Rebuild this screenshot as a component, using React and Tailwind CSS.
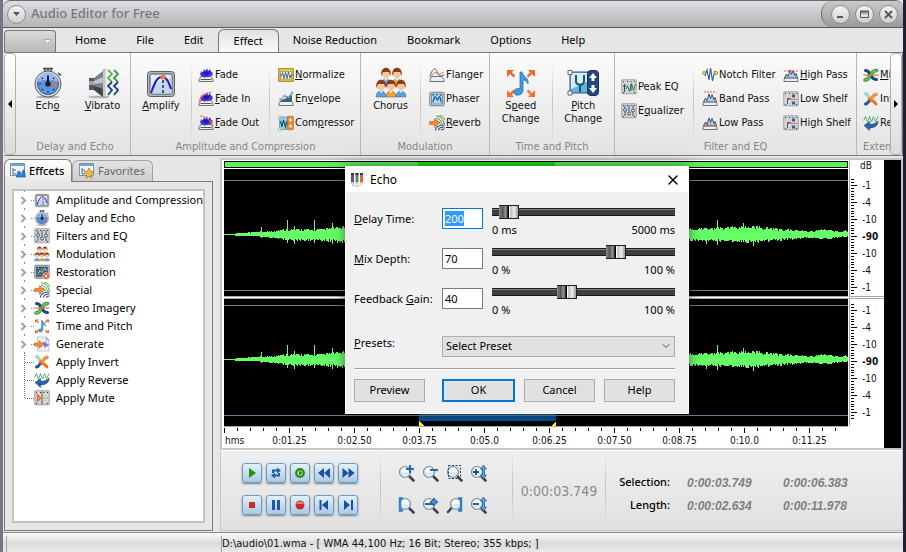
import { useEffect, useRef, useState } from 'react'
import { ChevronDown, X } from 'lucide-react'

const MENU = ['Home', 'File', 'Edit', 'Effect', 'Noise Reduction', 'Bookmark', 'Options', 'Help']

const TREE = [
  ['Amplitude and Compression', 'amplify', true],
  ['Delay and Echo', 'echo', true],
  ['Filters and EQ', 'equalizer', true],
  ['Modulation', 'chorus', true],
  ['Restoration', 'restore', true],
  ['Special', 'reverb', true],
  ['Stereo Imagery', 'mixer', true],
  ['Time and Pitch', 'speed', true],
  ['Generate', 'generate', true],
  ['Apply Invert', 'invert', false],
  ['Apply Reverse', 'reverse', false],
  ['Apply Mute', 'mute', false],
]

const PLAYBACK = [
  ['Play', 'play'],
  ['Loop', 'loop'],
  ['Play from start', 'playAll'],
  ['Rewind', 'rewind'],
  ['Forward', 'forward'],
  ['Stop', 'stop'],
  ['Pause', 'pause'],
  ['Record', 'record'],
  ['To start', 'toStart'],
  ['To end', 'toEnd'],
]

const ZOOMS = ['in', 'out', 'area', 'vin', 'left', 'full', 'right', 'vout']

const SCALE = ['-1', '-4', '-10', '-90', '-10', '-4', '-1']
const TIMES = ['0:01.25', '0:02.50', '0:03.75', '0:05.0', '0:06.25', '0:07.50', '0:08.75', '0:10.0', '0:11.25']

const ART = {
  echo: (
    <>
      <ellipse cx="16" cy="30" rx="12" ry="1.5" fill="#000" opacity=".25" />
      <path d="M11 1.5h10M13 1v3M19 1v3M16 1v4" stroke="#444" strokeWidth="1.6" fill="none" />
      <path d="M26 6l3 2.5" stroke="#666" strokeWidth="2" />
      <circle cx="16" cy="17" r="13" fill="#d8dadd" stroke="#5c5f63" />
      <circle cx="16" cy="17" r="10.5" fill="#5f93e0" stroke="#33588f" />
      <path d="M6 15a10 10 0 0 1 20 0c-6-3-14-3-20 0z" fill="#a8c8f5" opacity=".8" />
      <path d="M16 8v2M16 24v2M7 17h2M23 17h2M9.6 10.6l1.4 1.4M22.4 23.4L21 22M9.6 23.4L11 22M22.4 10.6L21 12" stroke="#1b2f55" strokeWidth="1.2" />
      <path d="M16 17h9" stroke="#f26a1b" strokeWidth="2.2" />
      <path d="M16 9v8" stroke="#0e1a33" strokeWidth="2" />
      <circle cx="16" cy="17" r="2.8" fill="#14233f" />
    </>
  ),
  vibrato: (
    <>
      <ellipse cx="12" cy="30" rx="11" ry="1.3" fill="#000" opacity=".25" />
      <path d="M2 11h5v12H2z" fill="#55595f" />
      <path d="M2 14h5v4H2z" fill="#9ba1a8" />
      <path d="M7 11L16 4v26L7 23z" fill="#7b8289" />
      <path d="M7 14l9-4v6l-9 1z" fill="#c0c6cc" />
      <path d="M7 19l9 3v8l-9-7z" fill="#3e444a" />
      <path d="M16 3l2-1v29l-2-1z" fill="#e3e3e3" stroke="#888" strokeWidth=".6" />
      <path d="M21 3l4 4-4 4 4 4" stroke="#5cb548" strokeWidth="1.8" fill="none" />
      <path d="M27 3l4 4-4 4 4 4" stroke="#3f9a4a" strokeWidth="1.8" fill="none" />
      <path d="M25 15l-4 4 4 4-4 5" stroke="#1d3f7a" strokeWidth="1.8" fill="none" />
      <path d="M31 15l-4 4 4 4-4 5" stroke="#1d3f7a" strokeWidth="1.8" fill="none" />
    </>
  ),
  amplify: (
    <>
      <rect x="2.5" y="4.5" width="27" height="25" rx="3" fill="#b4b8bd" stroke="#5a5d61" />
      <rect x="5" y="7" width="22" height="20" rx="1" fill="#e3f0fa" stroke="#49535e" />
      <path d="M5.5 26.5V19L26.5 10v16.5z" fill="#c0d9ec" />
      <path d="M6 26C10 15 12 10 17 10s7 6 9 12" stroke="#2a17c9" strokeWidth="2" fill="none" />
      <path d="M18 13v13" stroke="#1a2c4a" strokeWidth="1.5" strokeDasharray="3 2" />
      <circle cx="18" cy="10" r="2.5" fill="#ff7a1f" />
    </>
  ),
  chorus: (
    <>
      {[[11, 3, '#5aa3e2'], [22, 3, '#f0a430'], [6, 15, '#5aa3e2'], [16, 15, '#f0a430'], [26, 15, '#5aa3e2']].map(([x, y, c]) => (
        <g key={`${x}-${y}`}>
          <path d={`M${x - 5} ${y + 15}c0-8 10-8 10 0z`} fill={c} stroke="#4d5b70" strokeWidth=".5" />
          <circle cx={x} cy={y + 4} r="4" fill="#f4c79b" />
          <path d={`M${x - 4.6} ${y + 6}c-2-11 11.2-11 9.2 0l-1.6-4h-6z`} fill="#8c3a17" />
          <path d={`M${x - 1.5} ${y + 9}h3l-1.5 2z`} fill="#fff" />
        </g>
      ))}
    </>
  ),
  speed: (
    <>
      <path d="M2 10V3h7L6.8 5.2l3.5 3.5-1.8 1.8L5 7zM30 10V3h-7l2.2 2.2-3.5 3.5 1.8 1.8L27 7z" fill="#f4632a" />
      <path d="M2 23v7h7l-2.2-2.2 3.5-3.5-1.8-1.8L5 26zM30 23v7h-7l2.2-2.2-3.5-3.5 1.8-1.8L27 26z" fill="#f9702d" />
      <path d="M15 5h2c1 5 7 5 6 12-1-3-3-4-5-4v10c0 6-9 7-9 2 0-3 3-4 6-3.5z" fill="#3d9be3" stroke="#1c67ad" strokeWidth=".7" />
    </>
  ),
  pitch: (
    <>
      <path d="M3 5h20v21H3z" fill="#5cb5ee" stroke="#37556e" />
      <path d="M4 6h18v8L4 22z" fill="#d3ebfa" />
      <path d="M9 8v6c0 5 8 5 8 0V8M13 18v7" stroke="#1b5a55" strokeWidth="2" fill="none" />
      <path d="M1 3.5h4v4H1zM1 24h4v4H1z" fill="#fff" stroke="#666" />
      <rect x="20.5" y="3.5" width="11" height="25" rx="3.5" fill="#25487e" stroke="#152d54" />
      <path d="M26 6l4 5h-2.5v3h-3v-3H22zM26 26l4-5h-2.5v-3h-3v3H22z" fill="#fff" />
    </>
  ),
  fade: <FadeArt />,
  fadeIn: <FadeArt curve="M2 22C5 10 14 3 28 2" />,
  fadeOut: <FadeArt curve="M4 2c14 1 22 8 26 20" />,
  normalize: (
    <>
      <rect x="1.5" y="3.5" width="29" height="25" fill="#f1cf55" stroke="#9a7719" strokeWidth="2" />
      <rect x="5" y="9" width="22" height="15" fill="#f4f8f7" stroke="#77662b" />
      <path d="M3 18h4l2-7 3 12 3-13 3 13 3-13 3 12 2-6h4" fill="none" stroke="#436d72" strokeWidth="2" />
    </>
  ),
  envelope: (
    <>
      <Tray />
      <path d="M4 22c4-1 3-6 8-6s4-5 8-4 4-4 8-5v15z" fill="#3f6673" />
      <path d="M5 17L13 10l8 2 7-9" fill="none" stroke="#3d7dc0" strokeWidth="1.5" />
      <path d="M3.5 15.5h3v3h-3zM11.5 8.5h3v3h-3zM19.5 10.5h3v3h-3zM27 2h3v3h-3z" fill="#fff" stroke="#2c67a8" />
    </>
  ),
  compressor: (
    <>
      <rect x="3" y="4" width="17" height="25" fill="#8fd0ee" stroke="#3b6f8f" />
      <path d="M5 12l3 12 3-14 4 14 3-12" stroke="#1b4963" strokeWidth="2.2" fill="none" />
      <path d="M1 2h5v5H1zM1 26h5v5H1z" fill="#fff" stroke="#5e7e99" />
      <rect x="19" y="2.5" width="12" height="27" rx="2" fill="#f28322" stroke="#b05809" />
      <path d="M25 6v8M21.5 10h7M25 18v8M21.5 22h7" stroke="#fff" strokeWidth="2" />
    </>
  ),
  flanger: (
    <>
      <Tray />
      <path d="M2 20C6 2 13 0 16 9s8 11 14 6" fill="none" stroke="#56636e" strokeWidth="2" />
      <path d="M5 18c5-8 8-8 12-4s6-3 12-3" fill="none" stroke="#e55e43" strokeWidth="2" />
    </>
  ),
  phaser: (
    <>
      <rect x="1.5" y="2.5" width="29" height="27" rx="2" fill="#d4d8dc" stroke="#5a5f64" strokeWidth="1.5" />
      <rect x="5" y="6" width="22" height="20" fill="#a5dbf8" stroke="#245583" />
      <path d="M7 22c3-1 3-11 5-11s3 7 5 7 2-7 4-7 2 10 4 11" fill="none" stroke="#174f8c" strokeWidth="2.5" />
      <path d="M7 8h3M14 8h3M22 8h3" stroke="#16324d" strokeWidth="2" />
    </>
  ),
  reverb: (
    <>
      <path d="M14 2c9 0 15 7 17 17M14 7c7 0 11 5 13 12M15 12c4 0 7 3 8 7M21 1c5 1 9 4 11 9" stroke="#3f9b3c" strokeWidth="2" fill="none" />
      <path d="M13 31c0-7 7-11 18-11M19 31c0-4 5-7 12-7M25 31c0-2 3-3 6-3" stroke="#244579" strokeWidth="2.2" fill="none" />
      <path d="M1 13h10V7l10 9-10 9v-6H1z" fill="#f58a35" stroke="#b3540d" />
    </>
  ),
  peak: (
    <>
      <Plate />
      <path d="M10 20l3-7 4 12 4-16 4 14 4-13" fill="none" stroke="#2f7d4a" strokeWidth="2" />
      <path d="M7 10v16M4 14h6M20 10v14" stroke="#274a7d" strokeWidth="2" />
    </>
  ),
  equalizer: (
    <>
      <Plate />
      <path d="M8 5v21M16 5v21M24 5v21" stroke="#4a4f55" strokeWidth="2" />
      <path d="M5 12h6v4H5zM13 19h6v4h-6zM21 13h6v4h-6z" fill="#f7f7f7" stroke="#2f5f86" strokeWidth="1.5" />
    </>
  ),
  notch: (
    <>
      <path d="M6 18l4-12 4 20 3-24 4 26 4-18 3 6" fill="none" stroke="#2d5a95" strokeWidth="2.2" />
      <circle cx="4" cy="12" r="3" fill="#fff3b8" stroke="#b58b14" strokeWidth="2" />
      <circle cx="28" cy="12" r="3" fill="#fff3b8" stroke="#b58b14" strokeWidth="2" />
    </>
  ),
  band: <PassArt line="M4 2h25" />,
  low: <PassArt line="M4 20h25" />,
  high: <PassArt line="M2 8h28" />,
  lowShelf: <ShelfArt />,
  highShelf: <ShelfArt />,
  mixer: (
    <>
      <path d="M5 7c8 0 7 6 10 9s3 9 12 9" stroke="#1e4585" strokeWidth="6" fill="none" strokeLinecap="round" />
      <path d="M4 26c9 0 7-7 11-10s3-9 12-9" stroke="#267a3a" strokeWidth="7" fill="none" strokeLinecap="round" />
      <path d="M4 26c9 0 7-7 11-10s3-9 12-9" stroke="#6cc94c" strokeWidth="4" fill="none" strokeLinecap="round" />
      <path d="M1 16h30" stroke="#ed5136" strokeWidth="2" />
    </>
  ),
  invert: (
    <>
      <path d="M5 26c5-1 6-6 10-9s5-10 11-10" stroke="#2a568f" strokeWidth="6" fill="none" strokeLinecap="round" />
      <path d="M6 6c5 1 5 8 9 11s7 2 11 9" stroke="#ee6f22" strokeWidth="6" fill="none" strokeLinecap="round" />
      <path d="M5 5c3 1 4 4 6 6" stroke="#9fd9c8" strokeWidth="6" fill="none" strokeLinecap="round" />
      <path d="M26 6c-3 1-5 4-8 8" stroke="#f79a3c" strokeWidth="6" fill="none" strokeLinecap="round" />
    </>
  ),
  reverse: (
    <>
      <path d="M1 11l4-8 4 11 4-11 4 11 4-11 4 11 5-11" fill="none" stroke="#55b06c" strokeWidth="2" />
      <path d="M2 21l11-8v5c7 1 13-1 17-6 1 9-7 14-17 14v5z" fill="#2c62ab" stroke="#17366b" />
    </>
  ),
  restore: (
    <>
      <rect x="1.5" y="2.5" width="29" height="26" rx="2" fill="#cdd1d5" stroke="#54585c" strokeWidth="1.5" />
      <rect x="5" y="6" width="22" height="19" fill="#365f78" stroke="#1b3442" />
      <path d="M7 21l5-8 4 4 5-9 5 6M8 9h2M14 10h2M11 22h2M22 11h2M18 21h2" stroke="#a9dba8" strokeWidth="2" fill="none" />
      <circle cx="24" cy="24" r="7" fill="#e65729" stroke="#fff" />
      <path d="M21 21l6 6M27 21l-6 6" stroke="#fff" strokeWidth="2" />
    </>
  ),
  generate: (
    <>
      <path d="M7 2h17l6 6v22H7z" fill="#f4f4f6" stroke="#8d929a" />
      <path d="M24 2v6h6z" fill="#c9cdd3" stroke="#8d929a" />
      <path d="M17 17l3-4 2 8 2-7 2 6 3-4" stroke="#7a68e0" strokeWidth="2.5" fill="none" />
      <path d="M1 14h9V9l10 8-10 8v-5H1z" fill="#f58a35" stroke="#b3540d" />
    </>
  ),
  mute: (
    <>
      <Plate />
      <path d="M16 3v26" stroke="#5d6268" strokeWidth="2" />
      <path d="M7 10l6 6-6 6z" fill="#fff" stroke="#f0641c" strokeWidth="3" />
      <path d="M18 16h10" stroke="#8fc07f" strokeWidth="2" />
    </>
  ),
}

const GLYPHS = {
  play: <path d="M7 5l7 5-7 5z" fill="#2a8f0c" />,
  loop: <path d="M6 10V6.500h5V4.500l4 3-4 3V8.500H8V10zM14 10v3.500H9v2l-4-3 4-3v2h3V10z" fill="#245aa6" />,
  playAll: (
    <>
      <circle cx="10" cy="10" r="3.8" fill="none" stroke="#2a8f0c" strokeWidth="2.4" />
      <path d="M9 7.500l3.500 2.500L9 12.500z" fill="#2a8f0c" />
    </>
  ),
  rewind: <path d="M10 5v10l-6-5zM16 5v10l-6-5z" fill="#1f4f9c" />,
  forward: <path d="M4.5 5v10l6-5zM10.5 5v10l6-5z" fill="#1f4f9c" />,
  stop: <rect x="7" y="7" width="6" height="6" fill="#cc2a2a" />,
  pause: <path d="M6 5h3v10H6zM11 5h3v10h-3z" fill="#1f56a5" />,
  record: (
    <>
      <circle cx="10" cy="10" r="4.5" fill="#c92e2e" />
      <path d="M6 9a4.5 4.5 0 0 1 8 0z" fill="#ec8080" />
    </>
  ),
  toStart: <path d="M5.5 5h2v10h-2zM14 5v10l-6-5z" fill="#1f4f9c" />,
  toEnd: <path d="M13 5h2v10h-2zM6 5v10l6-5z" fill="#1f4f9c" />,
}

function Tray() {
  return <path d="M6 19h20l4 6v4H2v-4z" fill="#eceef0" stroke="#4c5055" strokeWidth="1.6" />
}

function Plate() {
  return (
    <>
      <rect x="1.5" y="1.5" width="29" height="28" rx="1" fill="#d2d4d6" stroke="#8b8e91" strokeWidth="1.5" />
      <path d="M4 5h2M26 5h2M4 27h2M26 27h2M12 5h2M19 5h2" stroke="#333" strokeWidth="2" />
    </>
  )
}

function FadeArt({ curve }) {
  return (
    <>
      <Tray />
      <path d="M4 14l3-6 3 3 2-7 3 4 3-5 3 5 3-4 2 5 3 2v5l-3 3-3-2-3 4-3-2-4 3-3-4-3 2z" fill="#4030e0" />
      <path d="M9 12l5-4 5 3 6-3-3 6-6 3z" fill="#2414ae" />
      {curve && <path d={curve} fill="none" stroke="#f47a2d" strokeWidth="2.2" />}
      <path d="M5 25h22" stroke="#222" strokeWidth="1.5" />
    </>
  )
}

function PassArt({ line }) {
  return (
    <>
      <Tray />
      <path d="M3 22l4-8 3 5 4-13 3 9 3-8 4 10 2-4 3 9z" fill="#b7cce0" stroke="#24446b" strokeWidth="1.8" />
      <path d={line} stroke="#f0592b" strokeWidth="2" strokeDasharray="4 2" />
    </>
  )
}

function ShelfArt() {
  return (
    <>
      <Plate />
      <path d="M9 26V15h6" stroke="#555" strokeWidth="2" fill="none" />
      <path d="M9 17h20" stroke="#e8542b" strokeWidth="2" strokeDasharray="4 2" />
      <circle cx="21" cy="10" r="3.5" fill="#2d5fa5" />
      <circle cx="21" cy="24" r="3.5" fill="#2d5fa5" />
    </>
  )
}

function Art({ name, size = 16 }) {
  return (
    <svg viewBox="0 0 32 32" width={size} height={size} className="shrink-0">
      {ART[name]}
    </svg>
  )
}

// "&" marks the access key, as in a menu resource
function Mnemonic({ text }) {
  const i = text.indexOf('&')
  if (i < 0) return text
  return (
    <>
      {text.slice(0, i)}
      <u className="underline-offset-1">{text[i + 1]}</u>
      {text.slice(i + 2)}
    </>
  )
}

function BigButton({ icon, lines }) {
  return (
    <button className="flex flex-1 flex-col items-center pt-1 leading-[13px]">
      <Art name={icon} size={32} />
      {lines.map((l) => (
        <span key={l}><Mnemonic text={l} /></span>
      ))}
    </button>
  )
}

function SmallColumn({ items }) {
  return (
    <div className="flex flex-col">
      {items.map(([icon, text]) => (
        <button key={text} className="flex h-6 items-center gap-px whitespace-nowrap">
          <Art name={icon} />
          <span><Mnemonic text={text} /></span>
        </button>
      ))}
    </div>
  )
}

function Divider() {
  return <div className="h-20 w-px shrink-0 bg-linear-to-b from-transparent via-[#c4c4c4] to-transparent" />
}

function Group({ title, className, children }) {
  return (
    <div className={`flex flex-col border-r border-[#b9b9b9] ${className}`}>
      <div className="flex h-[87px] pt-2.5">{children}</div>
      <div className="text-center leading-[14px] whitespace-nowrap text-[#858585]">{title}</div>
    </div>
  )
}

function Ribbon() {
  return (
    <div className="ml-px flex h-[104px] border-y border-r border-[#7b7b7b] bg-linear-to-b from-[#fbfbfb] to-[#e3e3e3] font-['DejaVu_Sans_Condensed','DejaVu_Sans',sans-serif] text-[11px] text-[#111]">
      <button aria-label="Scroll left" className="flex w-3 shrink-0 items-center justify-center rounded-sm border border-[#b0b0b0] bg-linear-to-b from-white to-[#dcdcdc]">
        <svg width="4" height="8"><path d="M4 0v8L0 4z" /></svg>
      </button>
      <Group title="Delay and Echo" className="w-[115px] shrink-0 pl-1">
        <BigButton icon="echo" lines={['Ech&o']} />
        <BigButton icon="vibrato" lines={['&Vibrato']} />
      </Group>
      <Group title="Amplitude and Compression" className="w-[230px] shrink-0">
        <BigButton icon="amplify" lines={['&Amplify']} />
        <Divider />
        <div className="w-[77px] shrink-0 pl-1.5">
          <SmallColumn items={[['fade', 'Fade'], ['fadeIn', '&Fade In'], ['fadeOut', '&Fade Out']]} />
        </div>
        <Divider />
        <div className="w-[90px] shrink-0 pl-2">
          <SmallColumn items={[['normalize', '&Normalize'], ['envelope', 'En&velope'], ['compressor', 'Com&pressor']]} />
        </div>
      </Group>
      <Group title="Modulation" className="w-[129px] shrink-0">
        <BigButton icon="chorus" lines={['Chorus']} />
        <Divider />
        <div className="w-[68px] shrink-0 pl-2">
          <SmallColumn items={[['flanger', 'Flanger'], ['phaser', 'Phaser'], ['reverb', '&Reverb']]} />
        </div>
      </Group>
      <Group title="Time and Pitch" className="w-[125px] shrink-0">
        <BigButton icon="speed" lines={['S&peed', 'Change']} />
        <Divider />
        <BigButton icon="pitch" lines={['&Pitch', 'Change']} />
      </Group>
      <Group title="Filter and EQ" className="w-[242px] shrink-0">
        <div className="w-[78px] shrink-0 pt-3 pl-1.5">
          <SmallColumn items={[['peak', 'Peak EQ'], ['equalizer', 'E&qualizer']]} />
        </div>
        <Divider />
        <div className="w-[89px] shrink-0 pl-2">
          <SmallColumn items={[['notch', 'Notch Filter'], ['band', 'Band Pass'], ['low', 'Low Pass']]} />
        </div>
        <SmallColumn items={[['high', '&High Pass'], ['lowShelf', 'Low Shelf'], ['highShelf', 'High Shelf']]} />
      </Group>
      <div className="flex min-w-0 flex-1 flex-col overflow-hidden pl-1.5">
        <div className="flex h-[87px] pt-2.5">
          <SmallColumn items={[['mixer', '&Mixer'], ['invert', 'Invert'], ['reverse', 'Reverse']]} />
        </div>
        <div className="leading-[14px] whitespace-nowrap text-[#858585]">Extended</div>
      </div>
      <button aria-label="Scroll right" className="flex w-3 shrink-0 items-center justify-center rounded-sm border border-[#b0b0b0] bg-linear-to-b from-white to-[#dcdcdc]">
        <svg width="4" height="8"><path d="M0 0v8l4-4z" /></svg>
      </button>
    </div>
  )
}

function TitleBar() {
  const round = 'flex size-[19px] items-center justify-center rounded-full border border-[#8d8d8d] bg-linear-to-b from-[#f4f4f4] to-[#cfcfcf] text-[#555]'
  return (
    <header className="flex h-7 items-stretch rounded-t-lg border-t border-b border-t-[#6a6a6a] border-b-[#5b5b5b] bg-linear-to-b from-[#dfdde2] to-[#b4b4b6]">
      <div className="flex flex-1 items-center gap-[5px] pl-1">
        <button aria-label="Application menu" className={round}>
          <svg width="7" height="4"><path d="M0 0h7L3.5 4z" fill="#555" /></svg>
        </button>
        <h1 className="font-['Noto_Sans',sans-serif] text-[13px] font-medium text-[#77777b]">Audio Editor for Free</h1>
      </div>
      <div className="flex items-center gap-[5px] rounded-l-xl rounded-tr-lg border-l border-[#6e6e6e] bg-linear-to-b from-[#c9c9c9] to-[#9b9b9b] pr-[5px] pl-[9px]">
        <button aria-label="Minimize" className={round}>
          <svg width="9" height="9"><path d="M1 6h6v2H1z" fill="#5a5a5a" /></svg>
        </button>
        <button aria-label="Maximize" className={round}>
          <svg width="9" height="9"><path d="M.5 1.5h8v6h-8zM0 1h9v2H0z" fill="none" stroke="#5a5a5a" /></svg>
        </button>
        <button aria-label="Close" className={round}>
          <svg width="9" height="9"><path d="M1 1l7 7M8 1L1 8" stroke="#5a5a5a" strokeWidth="2" /></svg>
        </button>
      </div>
    </header>
  )
}

function MenuBar({ current, onPick }) {
  return (
    <nav className="flex h-6 items-end font-['Noto_Sans',sans-serif] text-[11px] text-black">
      <button aria-label="Quick menu" className="ml-px flex h-[22px] w-[52px] items-center justify-end rounded-t-sm border border-b-0 border-[#777] bg-linear-to-b from-[#dcdcdc] to-[#b7b7b7] pr-[3px]">
        <svg width="9" height="5"><path d="M.5.5h8l-4 4z" fill="#fff" stroke="#aaa" /></svg>
      </button>
      <div className="ml-1 flex">
        {MENU.map((m) => (
          <button
            key={m}
            onClick={() => onPick(m)}
            className={`px-[15px] ${
              current === m
                ? '-mx-px -mb-px h-[24px] rounded-t-md border border-b-0 border-[#777] bg-linear-to-b from-[#e2e2e2] to-[#fbfbfb]'
                : 'h-[23px]'
            }`}
          >
            {m}
          </button>
        ))}
      </div>
    </nav>
  )
}

function TabIcon({ star }) {
  return (
    <svg viewBox="0 0 16 16" width="16" height="16">
      <path d="M.5.5h14v12H.5z" fill="#eef6fb" stroke="#7d93a4" />
      <path d="M1 1h13v2H1z" fill="#6fa6d0" />
      <path d="M3 5v6h3M3 7h3" stroke="#4a6a86" fill="none" />
      {star ? (
        <path d="M10 5l1.600 3.300 3.400.5-2.500 2.600.6 3.600-3.100-1.700L7 15l.6-3.600L5 8.800l3.400-.5z" fill="#f6b73c" stroke="#a56a0a" strokeWidth=".7" />
      ) : (
        <path d="M6 14c1 0 1-6 3-6s1 4 2 4 1-5 2.500-5S15 14 15.500 14z" fill="#2f86d6" stroke="#17578f" strokeWidth=".7" />
      )}
    </svg>
  )
}

function EffectsPanel() {
  return (
    <aside className="flex w-[209px] shrink-0 flex-col font-['Noto_Sans',sans-serif] text-[11px] text-black">
      <div className="flex items-end">
        <button className="relative -mb-px flex h-[23px] w-[68px] items-center gap-[3px] rounded-t-md border border-b-0 border-[#7b7b7b] bg-linear-to-b from-white to-[#e8e8e8] pl-[5px] font-medium">
          <TabIcon />
          Effcets
        </button>
        <button className="flex h-[21px] w-[81px] items-center gap-[3px] rounded-t-md border border-b-0 border-[#a3a3a3] bg-linear-to-b from-[#e2e2e2] to-[#cfcfcf] pl-1.5 text-[#666]">
          <TabIcon star />
          Favorites
        </button>
      </div>
      <div className="flex flex-1 border border-[#7b7b7b] p-[7px] pr-2">
        <ul className="flex-1 border-2 border-[#c3c3c3] bg-white">
          {TREE.map(([name, icon, parent]) => (
            <li key={name} className="flex h-[18px] items-center pl-[5px] whitespace-nowrap">
              {parent ? (
                <svg width="15" height="18" className="shrink-0">
                  <path d="M2.5 6L6 9.5 2.5 13" fill="none" stroke="#a2a2a2" strokeWidth="2" />
                  <path d="M12 9.5h3M5.5 0v1M5.5 17v1" stroke="#888" strokeDasharray="1 1" />
                </svg>
              ) : (
                <svg width="15" height="18" className="shrink-0">
                  <path d={icon === 'mute' ? 'M5.5 0v9.5H15' : 'M5.5 0v18M6 9.5h9'} fill="none" stroke="#777" strokeDasharray="1 1" />
                </svg>
              )}
              <Art name={icon} />
              <span className="pl-1.5">{name}</span>
            </li>
          ))}
        </ul>
      </div>
    </aside>
  )
}

// half-heights of the wave at given columns: [x, above, below]
const ENVELOPE = [
  [0, 0, 0], [10, 0, 0], [12, 1, 1], [30, 2, 1], [45, 3, 3], [60, 5, 5], [75, 5, 6], [95, 5, 6],
  [120, 8, 8], [300, 8, 8], [470, 6, 6], [530, 8, 8], [560, 5, 5], [585, 3, 3],
  [600, 5, 5], [618, 2, 2], [622, 4, 3], [624, 0, 0],
]
const SPIKES = { 37: [7, 3], 63: [14, 8], 70: [8, 9], 90: [14, 8], 108: [11, 9], 482: [6, 9], 493: [14, 10], 519: [11, 7], 529: [8, 11] }

function wavePath(mid) {
  const top = []
  const bottom = []
  for (let x = 0; x < 624; x++) {
    const i = Math.max(1, ENVELOPE.findIndex((p) => p[0] > x))
    const [x0, u0, d0] = ENVELOPE[i - 1]
    const [x1, u1, d1] = ENVELOPE[i]
    const t = (x - x0) / (x1 - x0)
    const n = Math.abs(Math.sin(x * 12.9898) * 43758.5453) % 1
    const k = Math.abs(Math.sin(x * 78.233) * 12543.123) % 1
    let up = (u0 + (u1 - u0) * t) * (0.6 + 0.45 * n)
    let down = (d0 + (d1 - d0) * t) * (0.6 + 0.45 * k)
    if (SPIKES[x]) [up, down] = SPIKES[x]
    up = Math.round(up)
    down = Math.round(down) + 1
    top.push(`L${x} ${mid - up}H${x + 1}`)
    bottom.unshift(`L${x + 1} ${mid + down}H${x}`)
  }
  return `M0 ${mid}${top.join('')}${bottom.join('')}Z`
}

function Channel({ mid, lines, selected }) {
  return (
    <svg viewBox="0 0 624 127" preserveAspectRatio="none" className="block h-[127px] w-full bg-black" shapeRendering="crispEdges">
      {selected && <rect x="195" y="0" width="137" height="122" fill="#0b5394" />}
      {lines.map((y) => (
        <rect key={y} x="0" y={y} width="624" height="1" fill="#6c7f99" />
      ))}
      <path d={wavePath(mid)} fill="#66ff66" />
      {selected && <path d="M195 122l5 5h-5zM332 122l-5 5h5z" fill="#ffff00" />}
    </svg>
  )
}

function DbTicks({ offset, start, end }) {
  const ticks = []
  for (let y = start; y <= end; y++) {
    const m = (((y - offset) % 17) + 17) % 17
    if (m === 0) ticks.push([y, 6])
    else if ([3, 6, 9, 11, 14].includes(m)) ticks.push([y, 3])
  }
  return (
    <svg width="7" height="127" className="block shrink-0">
      {ticks.map(([y, w]) => (
        <rect key={y} x="1" y={y} width={w} height="1" />
      ))}
    </svg>
  )
}

function DbScale() {
  const labels = (
    <ol className="flex flex-1 flex-col pl-[5px]">
      {SCALE.map((v, i) => (
        <li key={i} className={`h-[17px] leading-[17px] ${v === '-90' ? 'font-bold' : ''}`}>{v}</li>
      ))}
    </ol>
  )
  return (
    <div className="flex w-9 shrink-0 flex-col pt-px pl-px text-[10px]">
      <div className="h-2 border-l border-[#a8a8a8] pl-2.5 leading-[9px]">dB</div>
      <div className="flex h-[127px] border-l border-[#a8a8a8]">
        <DbTicks offset={16} start={9} end={125} />
        <div className="flex flex-1 pt-2">{labels}</div>
      </div>
      <div className="h-[3px] border-y border-[#a8a8a8] bg-white" />
      <div className="flex h-[127px] border-l border-[#a8a8a8]">
        <DbTicks offset={11} start={4} end={120} />
        <div className="flex flex-1 pt-[3px]">{labels}</div>
      </div>
    </div>
  )
}

function WaveView() {
  return (
    <div className="flex border-2 border-[#c6c6c6] bg-white pl-0.5 font-['DejaVu_Sans_Condensed','DejaVu_Sans',sans-serif] text-[#111]">
      <div className="min-w-0 flex-1 pt-px">
        <div className="mb-px flex h-[7px] border border-black bg-[#5cf05c]">
          <div className="w-[31%]" />
          <div className="w-[22%] bg-[#1fe01f]" />
        </div>
        <Channel mid={65} lines={[11, 121]} />
        <div className="h-[3px] border-y border-[#a8a8a8] bg-white" />
        <Channel mid={60} lines={[6, 116]} selected />
        <div className="h-px bg-[#a8a8a8]" />
        <div className="h-[21px] overflow-hidden text-[10px]">
          <svg viewBox="0 0 624 6" preserveAspectRatio="none" className="block h-1.5 w-full" shapeRendering="crispEdges">
            {Array.from({ length: 48 }, (_, i) => (
              <rect key={i} x={i * 13} y="1" width="1" height={i % 5 ? 3 : 5} />
            ))}
          </svg>
          <div className="flex leading-[15px]">
            <span className="w-[33px] shrink-0 pl-px">hms</span>
            {TIMES.map((t) => (
              <span key={t} className="w-[65px] shrink-0 text-center">{t}</span>
            ))}
          </div>
        </div>
      </div>
      <DbScale />
      <div className="w-[17px] shrink-0 bg-black" />
    </div>
  )
}

function ZoomIcon({ kind }) {
  const cx = kind === 'right' ? 10 : 7
  const handle = kind === 'right' ? 'M6 10.5L2 15' : 'M10.5 10.5L15.5 15.5'
  return (
    <svg viewBox="0 0 17 17" width="17" height="17">
      <path d={handle} stroke="#3d4247" strokeWidth="2.5" strokeLinecap="round" />
      <circle cx={cx} cy="7" r="5.500" fill="#dcebf1" stroke="#7f9199" strokeWidth="1.200" />
      <path d={`M${cx - 4} 7a4 4 0 0 1 8 0z`} fill="#fff" />
      {kind === 'in' && <path d="M12 0v8M8 4h8" stroke="#1d6cb8" strokeWidth="2" />}
      {kind === 'out' && <path d="M8 5h8" stroke="#1d6cb8" strokeWidth="2" />}
      {kind === 'area' && <path d="M2.5.5h12v13h-12z" fill="none" stroke="#1c3f78" strokeDasharray="2 1.500" />}
      {(kind === 'vin' || kind === 'vout') && (
        <>
          <path d="M13.5 0l3 4h-2v6h2l-3 4-3-4h2V4h-2z" fill="#4fa6ea" stroke="#1b5695" strokeWidth=".7" />
          <path d={kind === 'vin' ? 'M6 4v6M3 7h6' : 'M3 7h6'} stroke="#1d4f96" strokeWidth="1.800" />
        </>
      )}
      {kind === 'full' && (
        <>
          <path d="M3 7h8" stroke="#1d4f96" strokeWidth="1.800" />
          <path d="M12 1l1.600 2.400L16 5l-2.400 1.600L12 9l-1.600-2.400L8 5l2.400-1.600z" fill="#3d8edb" stroke="#1b5695" />
        </>
      )}
      {kind === 'left' && <path d="M5 1.500H2v12h3" fill="none" stroke="#2c80cf" strokeWidth="2.400" />}
      {kind === 'right' && <path d="M12 1.500h3v12h-3" fill="none" stroke="#2c80cf" strokeWidth="2.400" />}
    </svg>
  )
}

function Transport() {
  return (
    <div className="flex flex-1 items-center border border-[#c6c6c6] border-t-white bg-linear-to-b from-[#efefef] to-[#e1e1e1] pb-[3px]">
      <div className="ml-[21px] grid shrink-0 grid-cols-5 gap-x-1 gap-y-3">
        {PLAYBACK.map(([label, icon]) => (
          <button key={label} aria-label={label} className="size-5 rounded-[3px] border border-[#6d9cc2] bg-linear-to-b from-[#e3f1fb] to-[#a9c9e4] shadow-[0_1px_2px_#777]">
            <svg viewBox="1 1 18 18" className="block size-[18px]">{GLYPHS[icon]}</svg>
          </button>
        ))}
      </div>
      <div className="mr-[17px] ml-[22px] h-[76px] w-px bg-linear-to-b from-transparent via-[#c2c2c2] to-transparent" />
      <div className="grid shrink-0 grid-cols-4 gap-x-[7px] gap-y-[15px]">
        {ZOOMS.map((k) => (
          <button key={k} aria-label={`Zoom ${k}`}><ZoomIcon kind={k} /></button>
        ))}
      </div>
      <div className="ml-[25px] h-[76px] w-px bg-linear-to-b from-transparent via-[#c2c2c2] to-transparent" />
      <div className="w-[92px] shrink-0 pt-1 text-center font-['DejaVu_Sans_Condensed','DejaVu_Sans',sans-serif] text-sm text-[#8a8a8a]">0:00:03.749</div>
      <div className="h-[76px] w-px bg-linear-to-b from-transparent via-[#c2c2c2] to-transparent" />
      <table className="mt-2.5 ml-3 text-left font-['Noto_Sans',sans-serif] text-[11px] text-black">
        <tbody>
          {[['Selection:', '0:00:03.749', '0:00:06.383'], ['Length:', '0:00:02.634', '0:00:11.978']].map(([k, a, b]) => (
            <tr key={k} className="h-[23px]">
              <th className="w-[52px] text-right font-medium">{k}</th>
              <td className="w-24 pl-[17px] font-['Liberation_Sans',sans-serif] text-xs font-bold text-[#808080] italic">{a}</td>
              <td className="pl-[17px] font-['Liberation_Sans',sans-serif] text-xs font-bold text-[#808080] italic">{b}</td>
            </tr>
          ))}
        </tbody>
      </table>
    </div>
  )
}

const FIELDS = [
  { id: 'delay', label: '&Delay Time:', value: 200, max: 5000, unit: 'ms' },
  { id: 'depth', label: '&Mix Depth:', value: 70, max: 100, unit: '%' },
  { id: 'gain', label: 'Feedback &Gain:', value: 40, max: 100, unit: '%' },
]

function EchoDialog({ onClose }) {
  const [values, setValues] = useState(() => Object.fromEntries(FIELDS.map((f) => [f.id, f.value])))
  const first = useRef(null)

  useEffect(() => {
    first.current.focus()
    first.current.select()
  }, [])

  const set = (id) => (e) => setValues({ ...values, [id]: Number(e.target.value) || 0 })
  const button = 'h-[23px] w-[71px] border border-[#adadad] bg-[#e1e1e1]'

  return (
    <section
      role="dialog"
      aria-label="Echo"
      className="absolute top-[166px] left-[342px] w-[344px] border border-white bg-[#f0f0f0] font-['Noto_Sans',sans-serif] text-[11px] text-black shadow-[0_0_12px_rgba(0,0,0,0.5)]"
    >
      <div className="flex h-[25px] items-center bg-white pl-1">
        <svg width="14" height="16" viewBox="0 0 14 16">
          <path d="M1 1h3v9L2.5 13 1 10z" fill="#7d3f98" />
          <path d="M5.5 1h3v9L7 13l-1.5-3z" fill="#2a9d8f" />
          <path d="M10 1h3v9l-1.5 3-1.5-3z" fill="#e2662c" />
          <path d="M1 1h3v2H1zM5.5 1h3v2h-3zM10 1h3v2h-3z" fill="#334" />
          <path d="M1 10h3l-1.5 3zM5.5 10h3L7 13zM10 10h3l-1.5 3z" fill="#f5c98a" />
          <path d="M2 13c2 2 3-1 5 2 1-3 3 0 4-2" fill="none" stroke="#8ec8e8" />
        </svg>
        <h2 className="flex-1 pl-1.5 text-xs">Echo</h2>
        <button aria-label="Close" onClick={onClose} className="pr-[7px]">
          <X size={16} strokeWidth={2} />
        </button>
      </div>
      <form className="pt-[13px] pr-[13px] pb-[11px] pl-2" onSubmit={(e) => e.preventDefault()}>
        {FIELDS.map((f, i) => (
          <div key={f.id} className="grid h-10 grid-cols-[88px_41px_1fr] items-start">
            <label htmlFor={f.id} className="pt-[5px] leading-[18px]"><Mnemonic text={f.label} /></label>
            <input
              id={f.id}
              ref={i === 0 ? first : null}
              value={values[f.id]}
              onChange={set(f.id)}
              className="mt-[3px] h-[21px] w-full border border-[#7a7a7a] bg-white px-0.5 leading-[14px] outline-none selection:bg-[#3399ff] selection:text-white focus:border-[#0078d7]"
            />
            <div className="pl-[9px]">
              <input
                type="range"
                aria-label={f.id}
                min="0"
                max={f.max}
                value={values[f.id]}
                onChange={set(f.id)}
                className="block h-3.5 w-full appearance-none bg-[linear-gradient(#1a1a1a_0_1px,#808080_1px_2px,#404040_2px_7px,#1a1a1a_7px_8px)] bg-[length:100%_8px] bg-center bg-no-repeat [&::-webkit-slider-thumb]:h-3.5 [&::-webkit-slider-thumb]:w-5 [&::-webkit-slider-thumb]:appearance-none [&::-webkit-slider-thumb]:border-y [&::-webkit-slider-thumb]:border-r [&::-webkit-slider-thumb]:border-[#222] [&::-webkit-slider-thumb]:bg-[linear-gradient(90deg,#888,#555_20%,#999_35%,#333_45%,#000_50%,#fff_55%,#bbb_62%,#eee_80%,#999)]"
              />
              <div className="flex justify-between pt-0.5 leading-[18px]">
                <span>0 {f.unit}</span>
                <span>{f.max} {f.unit}</span>
              </div>
            </div>
          </div>
        ))}
        <div className="grid grid-cols-[88px_1fr] pt-[11px]">
          <label htmlFor="preset" className="leading-[14px]"><Mnemonic text="&Presets:" /></label>
          <div className="relative">
            <select id="preset" className="h-[21px] w-full appearance-none border border-[#adadad] bg-[#e1e1e1] pl-[3px]">
              <option>Select Preset</option>
            </select>
            <ChevronDown size={12} strokeWidth={2} className="pointer-events-none absolute top-1 right-[3px] text-[#555]" />
          </div>
        </div>
        <div className="mt-[11px] h-0.5 border-t border-b border-t-[#a0a0a0] border-b-white" />
        <div className="mt-[9px] flex justify-between">
          <button type="button" className={button}>Preview</button>
          <button className="ml-2 h-[23px] w-[73px] border-2 border-[#0078d7] bg-[#e1e1e1]">OK</button>
          <button type="button" onClick={onClose} className={button}>Cancel</button>
          <button type="button" className={button}>Help</button>
        </div>
      </form>
    </section>
  )
}

export default function App() {
  const [tab, setTab] = useState('Effect')
  const [open, setOpen] = useState(true)

  return (
    <div className="relative flex min-h-screen flex-col border-r-[3px] border-l-[3px] border-r-[#201f36] border-l-[#7a7482] bg-[#e6e6e6]">
      <TitleBar />
      <MenuBar current={tab} onPick={setTab} />
      <Ribbon />
      <main className="flex flex-1 gap-[7px] pt-[3px] pb-px pl-px">
        <EffectsPanel />
        <div className="-mt-px flex min-w-0 flex-1 flex-col">
          <WaveView />
          <Transport />
        </div>
      </main>
      <footer className="flex h-[22px] items-center border-t border-[#8a8a8a] bg-linear-to-b from-[#fafafa] via-[#dcdcdc] to-[#ececec] font-['DejaVu_Sans_Condensed','DejaVu_Sans',sans-serif] text-[11px] text-[#111]">
        <div className="ml-[3px] h-4 w-[215px] shrink-0 border-l border-[#a3a3a3]" />
        <div className="flex-1 border-l border-[#a3a3a3] leading-4">D:\audio\01.wma - [ WMA 44,100 Hz; 16 Bit; Stereo; 355 kbps; ]</div>
      </footer>
      {open && <EchoDialog onClose={() => setOpen(false)} />}
    </div>
  )
}
